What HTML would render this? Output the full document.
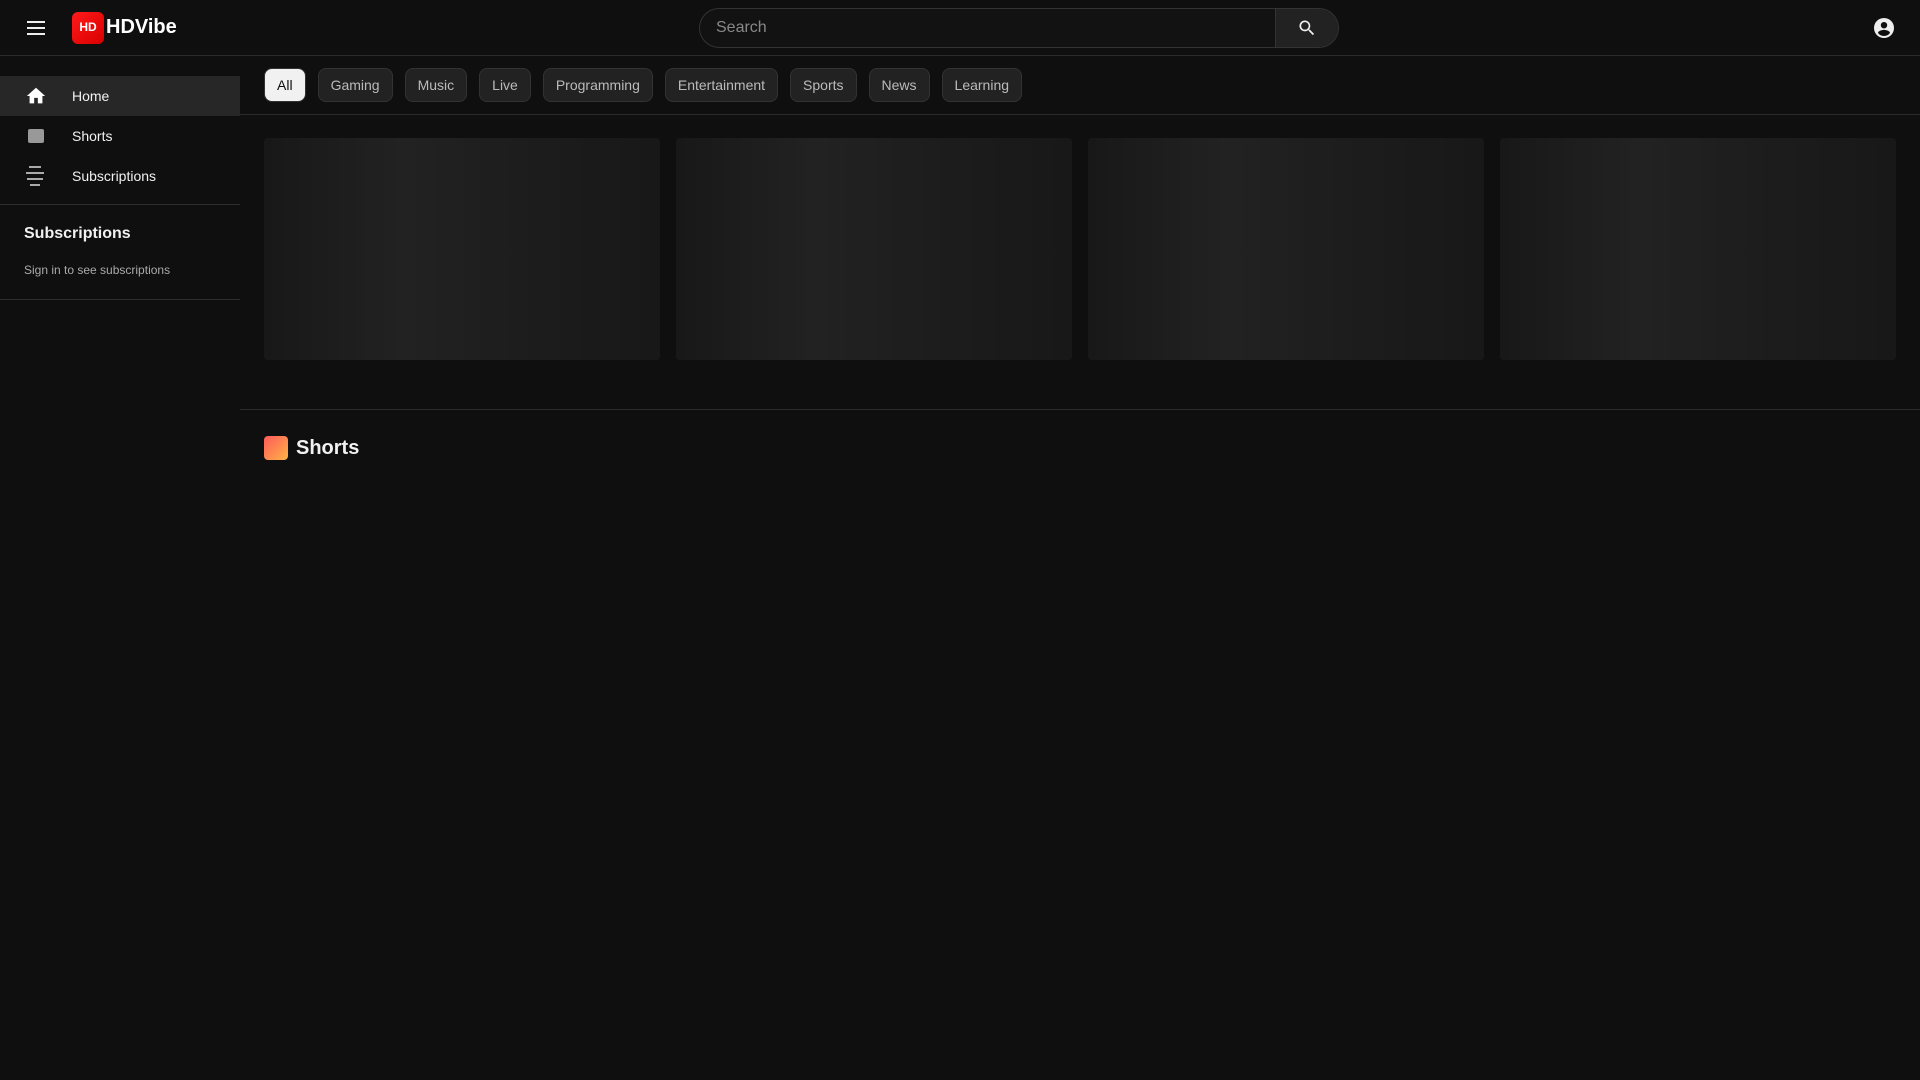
<!DOCTYPE html>
<html><head><meta charset="utf-8"><style>
*{box-sizing:border-box;margin:0;padding:0}
body{width:1920px;height:1080px;background:#0f0f0f;font-family:"Liberation Sans",Roboto,sans-serif;color:#f1f1f1;overflow:hidden;position:relative}
.hdr{position:absolute;left:0;top:0;width:1920px;height:56px;border-bottom:1px solid #2a2a2a}
.ham{position:absolute;left:27px;top:21px;width:18px}
.ham i{display:block;height:2px;background:#eee;margin-bottom:4px}
.logo{position:absolute;left:72px;top:12px;width:32px;height:32px;border-radius:6px;background:linear-gradient(135deg,#ff1a1a,#d90000);color:#fff;font-weight:bold;font-size:12px;text-align:center;line-height:30px}
.brand{position:absolute;left:106px;top:16px;font-size:20px;font-weight:bold;color:#fff}
.search{position:absolute;left:699px;top:8px;width:640px;height:40px;border:1px solid #333;border-radius:20px;background:#121212;overflow:hidden}
.search span{position:absolute;left:16px;top:10px;color:#888;font-size:16px}
.sbtn{position:absolute;right:0;top:0;width:63px;height:38px;background:#222;border-left:1px solid #333}
.side{position:absolute;left:0;top:56px;width:240px}
.item{height:40px;position:relative;font-size:14px}
.item span{position:absolute;left:72px;top:12px}
.item.act{background:#272727}
.sep{border-top:1px solid #2e2e2e}
.chips{position:absolute;left:264px;top:68px;display:flex;gap:12px}
.chip{height:34px;padding:0 12px;border-radius:8px;background:#222;border:1px solid #333;color:#bbb;font-size:14px;line-height:32px}
.chip.on{background:#f1f1f1;color:#0f0f0f}
.line{position:absolute;left:240px;width:1680px;border-top:1px solid #2a2a2a}
.card{position:absolute;top:138px;width:396px;height:222px;border-radius:4px;background:linear-gradient(90deg,#181818,#222 35%,#1c1c1c 70%,#181818)}
</style></head><body>
<div class="hdr">
<div class="ham"><i></i><i></i><i></i></div>
<div class="logo">HD</div><div class="brand">HDVibe</div>
<div class="search"><span>Search</span><div class="sbtn"><svg style="position:absolute;left:21px;top:9px" width="20" height="20" viewBox="0 0 24 24"><path fill="#eee" d="M15.5 14h-.8l-.3-.3A6.5 6.5 0 1 0 9.5 16a6.5 6.5 0 0 0 4.2-1.6l.3.3v.8l5 5 1.5-1.5-5-5zm-6 0A4.5 4.5 0 1 1 14 9.5 4.5 4.5 0 0 1 9.5 14z"/></svg></div></div>
<svg style="position:absolute;left:1872px;top:16px" width="24" height="24" viewBox="0 0 24 24"><path fill="#eee" d="M12 2a10 10 0 1 0 0 20 10 10 0 0 0 0-20zm0 4a3.2 3.2 0 1 1 0 6.4A3.2 3.2 0 0 1 12 6zm0 14a7.7 7.7 0 0 1-6-3c0-2 4-3.1 6-3.1s6 1.1 6 3.1a7.7 7.7 0 0 1-6 3z"/></svg>
</div>
<div class="side">
<div style="height:20px"></div>
<div class="item act"><svg style="position:absolute;left:25px;top:9px" width="22" height="22" viewBox="0 0 24 24"><path fill="#fff" d="M10 20v-6h4v6h5v-8h3L12 3 2 12h3v8z"/></svg><span>Home</span></div>
<div class="item"><div style="position:absolute;left:28px;top:13px;width:16px;height:14px;border-radius:2px;background:#999"></div><span>Shorts</span></div>
<div class="item"><div style="position:absolute;left:26px;top:10px;width:18px"><i style="display:block;height:2px;background:#aaa;margin:0 3px 4px"></i><i style="display:block;height:2px;background:#aaa;margin-bottom:4px"></i><i style="display:block;height:2px;background:#aaa;margin:0 1px 4px"></i><i style="display:block;height:2px;background:#aaa;margin:0 4px"></i></div><span>Subscriptions</span></div>
<div style="height:8px"></div>
<div class="sep"></div>
<div style="padding:20px 24px 0;font-size:16px;font-weight:bold;height:58px">Subscriptions</div>
<div style="padding:0 24px;font-size:12px;color:#aaa;height:36px">Sign in to see subscriptions</div>
<div class="sep"></div>
</div>
<div class="chips">
<div class="chip on">All</div><div class="chip">Gaming</div><div class="chip">Music</div><div class="chip">Live</div><div class="chip">Programming</div><div class="chip">Entertainment</div><div class="chip">Sports</div><div class="chip">News</div><div class="chip">Learning</div>
</div>
<div class="line" style="top:114px"></div>
<div class="card" style="left:264px"></div>
<div class="card" style="left:676px"></div>
<div class="card" style="left:1088px"></div>
<div class="card" style="left:1500px"></div>
<div class="line" style="top:409px"></div>
<div style="position:absolute;left:264px;top:436px;width:24px;height:24px;border-radius:4px;background:linear-gradient(135deg,#ff5a5a,#ffb347)"></div>
<div style="position:absolute;left:296px;top:437px;font-size:20px;font-weight:bold">Shorts</div>
</body></html>
